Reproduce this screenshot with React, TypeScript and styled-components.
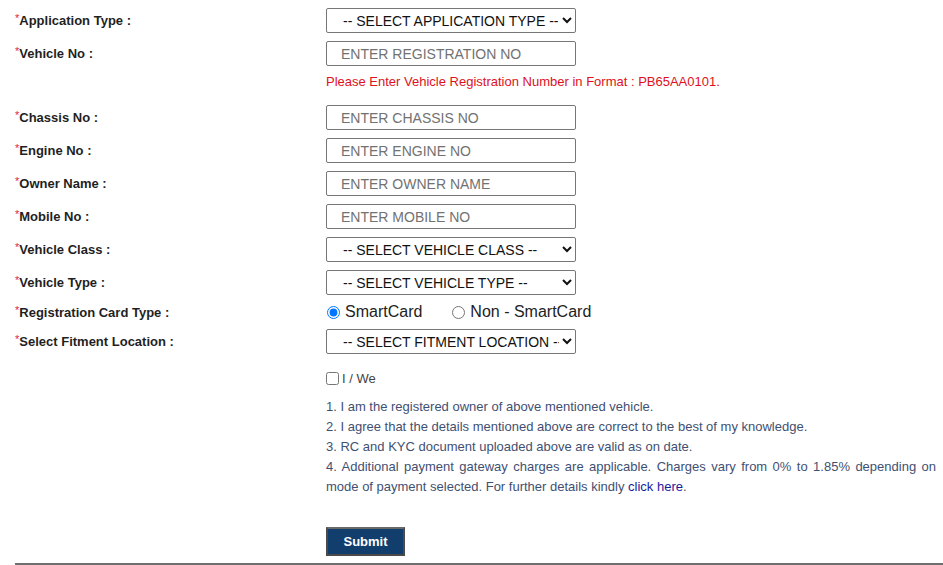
import React from 'react';
import styled, { createGlobalStyle } from 'styled-components';

const GlobalStyle = createGlobalStyle`
  html, body {
    margin: 0;
    padding: 0;
    background: #fff;
  }
  body {
    font-family: 'Liberation Sans', Arial, sans-serif;
  }
`;

interface FieldRowProps {
  label: string;
  required?: boolean;
  short?: boolean;
  children: React.ReactNode;
}

const FieldRow = ({ label, required = true, short, children }: FieldRowProps) => (
  <Row $short={short}>
    <Label>
      {required && <Star>*</Star>}
      {label}
    </Label>
    <Field>{children}</Field>
  </Row>
);

export default function App() {
  return (
    <>
      <GlobalStyle />
      <FormContainer>
        <FieldRow label="Application Type :">
          <Select defaultValue="">
            <option value="">-- SELECT APPLICATION TYPE --</option>
          </Select>
        </FieldRow>
        <FieldRow label="Vehicle No :">
          <TextInput placeholder="ENTER REGISTRATION NO" />
        </FieldRow>
        <ErrorRow>
          <span />
          <ErrorText>Please Enter Vehicle Registration Number in Format : PB65AA0101.</ErrorText>
        </ErrorRow>
        <FieldRow label="Chassis No :">
          <TextInput placeholder="ENTER CHASSIS NO" />
        </FieldRow>
        <FieldRow label="Engine No :">
          <TextInput placeholder="ENTER ENGINE NO" />
        </FieldRow>
        <FieldRow label="Owner Name :">
          <TextInput placeholder="ENTER OWNER NAME" />
        </FieldRow>
        <FieldRow label="Mobile No :">
          <TextInput placeholder="ENTER MOBILE NO" />
        </FieldRow>
        <FieldRow label="Vehicle Class :">
          <Select defaultValue="">
            <option value="">-- SELECT VEHICLE CLASS --</option>
          </Select>
        </FieldRow>
        <FieldRow label="Vehicle Type :">
          <Select defaultValue="">
            <option value="">-- SELECT VEHICLE TYPE --</option>
          </Select>
        </FieldRow>
        <FieldRow label="Registration Card Type :" short>
          <RadioGroup>
            <RadioLabel>
              <Radio type="radio" name="card" defaultChecked />
              SmartCard
            </RadioLabel>
            <RadioLabel>
              <Radio type="radio" name="card" />
              Non - SmartCard
            </RadioLabel>
          </RadioGroup>
        </FieldRow>
        <FieldRow label="Select Fitment Location :">
          <Select defaultValue="">
            <option value="">-- SELECT FITMENT LOCATION --</option>
          </Select>
        </FieldRow>

        <Declaration>
          <CheckLabel>
            <Checkbox type="checkbox" />I / We
          </CheckLabel>
          <Terms>
            <p>1. I am the registered owner of above mentioned vehicle.</p>
            <p>2. I agree that the details mentioned above are correct to the best of my knowledge.</p>
            <p>3. RC and KYC document uploaded above are valid as on date.</p>
            <p>
              4. Additional payment gateway charges are applicable. Charges vary from 0% to 1.85% depending on
              mode of payment selected. For further details kindly <TermsLink href="#">click here</TermsLink>.
            </p>
          </Terms>
          <SubmitButton type="button">Submit</SubmitButton>
        </Declaration>
      </FormContainer>
    </>
  );
}

const FormContainer = styled.div`
  margin-left: 15px;
  padding-top: 4px;
  padding-bottom: 7px;
  border-bottom: 2px solid #6f6f6f;
`;

const Row = styled.div<{ $short?: boolean }>`
  display: grid;
  grid-template-columns: 311px 1fr;
  align-items: center;
  height: ${(p) => (p.$short ? '26px' : '33px')};
`;

const Label = styled.div`
  font-size: 13px;
  font-weight: bold;
  color: #1f1f1f;
`;

const Star = styled.span`
  color: #e0283a;
  font-size: 11px;
  font-weight: normal;
  vertical-align: 3px;
  line-height: 0;
`;

const Field = styled.div`
  display: flex;
  align-items: center;
`;

const TextInput = styled.input`
  box-sizing: border-box;
  width: 250px;
  height: 25px;
  padding: 0 14px;
  border: 1px solid #767676;
  border-radius: 2px;
  font-family: 'Liberation Sans', Arial, sans-serif;
  font-size: 14px;
  color: #222;
  background: #fff;

  &::placeholder {
    color: #727272;
  }
`;

const Select = styled.select`
  box-sizing: border-box;
  width: 250px;
  height: 25px;
  padding: 0 0 0 12px;
  border: 1px solid #767676;
  border-radius: 2px;
  font-family: 'Liberation Sans', Arial, sans-serif;
  font-size: 14px;
  color: #111;
  background: #fff;
`;

const ErrorRow = styled.div`
  display: grid;
  grid-template-columns: 311px 1fr;
  height: 31px;
  padding-top: 2px;
  box-sizing: border-box;
`;

const ErrorText = styled.div`
  font-size: 13px;
  line-height: 20px;
  color: #e0101c;
`;

const RadioGroup = styled.div`
  display: flex;
  align-items: center;
  gap: 29px;
`;

const RadioLabel = styled.label`
  display: flex;
  align-items: center;
  font-size: 16px;
  color: #222;
`;

const Radio = styled.input`
  width: 13px;
  height: 13px;
  margin: 0 5px 0 1px;
`;

const Declaration = styled.div`
  margin-left: 311px;
  padding-top: 11px;
`;

const CheckLabel = styled.label`
  display: flex;
  align-items: center;
  height: 18px;
  font-size: 13px;
  color: #444;
`;

const Checkbox = styled.input`
  width: 13px;
  height: 13px;
  margin: 0 3px 0 0;
`;

const Terms = styled.div`
  width: 610px;
  margin-top: 10px;
  font-size: 13px;
  line-height: 20px;
  color: #3f5072;
  text-align: justify;

  p {
    margin: 0;
  }
`;

const TermsLink = styled.a`
  color: #1a1a9c;
  text-decoration: none;
`;

const SubmitButton = styled.button`
  display: block;
  margin-top: 30px;
  width: 79px;
  height: 29px;
  background: #113e6c;
  border: 2px solid #4a4a4a;
  border-top-color: #6a6a6a;
  color: #fff;
  font-family: 'Liberation Sans', Arial, sans-serif;
  font-size: 13px;
  font-weight: bold;
  cursor: pointer;
`;
